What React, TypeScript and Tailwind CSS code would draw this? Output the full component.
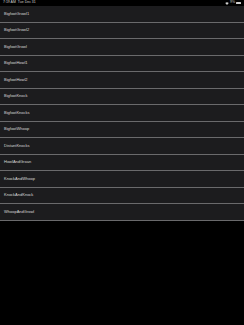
const Sounds = [
  'BigfootGrowl1',
  'BigfootGrowl2',
  'BigfootGrowl',
  'BigfootHowl1',
  'BigfootHowl2',
  'BigfootKnock',
  'BigfootKnocks',
  'BigfootWhoop',
  'DistantKnocks',
  'HowlAndGroan',
  'KnockAndWhoop',
  'KnockAndKnock',
  'WhoopAndGrowl',
];

function StatusBar() {
  return (
    <div className="flex h-[6px] items-center justify-between bg-black px-[3px] text-[3.5px] leading-none text-[#d0d0d0]">
      <span>7:19 AM&nbsp;&nbsp;Tue Dec 31</span>
      <div className="flex items-center gap-[1px]">
        <svg width="4" height="3" viewBox="0 0 8 6">
          <path d="M4 6 L0.5 2 A5 5 0 0 1 7.5 2 Z" fill="#d0d0d0" />
        </svg>
        <span>9%</span>
        <div className="h-[2.5px] w-[5px] rounded-[0.5px] border-[0.5px] border-[#d0d0d0]" />
      </div>
    </div>
  );
}

export default function App() {
  return (
    <main className="h-[325px] w-[244px] bg-black font-['Liberation_Sans',sans-serif]">
      <StatusBar />
      <ul>
        {Sounds.map((name, index) => (
          <li
            key={index}
            className="box-border flex h-[16.5px] items-center border-b border-[#6a6a6c] bg-[#1c1c1e] pl-[4px] text-[4px] text-[#d8d8d8]"
          >
            {name}
          </li>
        ))}
      </ul>
    </main>
  );
}
